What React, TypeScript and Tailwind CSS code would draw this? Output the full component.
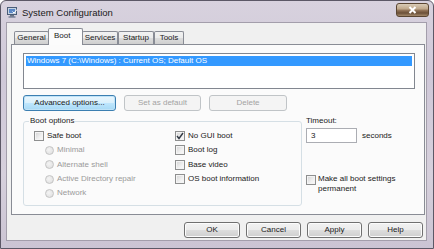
import React from "react";

const font = "font-['Liberation_Sans',Arial,sans-serif]";

function Btn({
  label,
  w,
  disabled,
  primary,
}: {
  label: string;
  w: string;
  disabled?: boolean;
  primary?: boolean;
}) {
  let cls =
    "h-[16px] flex items-center justify-center rounded-[3px] border text-[8px] leading-none ";
  if (disabled) {
    cls += "border-[#c0c4c7] bg-[#f4f4f4] text-[#a3a3a3]";
  } else if (primary) {
    cls +=
      "border-[#3c7fb1] bg-[linear-gradient(180deg,#eaf6fd_0%,#d9f0fc_50%,#bee6fd_51%,#a7d9f5_100%)] text-[#1a1a1a] shadow-[inset_0_0_0_1px_#bfe3f8]";
  } else {
    cls +=
      "border-[#707070] bg-[linear-gradient(180deg,#f2f2f2_0%,#ebebeb_50%,#dddddd_51%,#cfcfcf_100%)] text-[#1a1a1a] shadow-[inset_0_0_0_1px_#fcfcfc]";
  }
  return <div className={`${cls} ${w}`}>{label}</div>;
}

function Check({ checked, disabled }: { checked?: boolean; disabled?: boolean }) {
  return (
    <div
      className={`w-[10px] h-[10px] shrink-0 border flex items-center justify-center ${
        disabled ? "border-[#b1b1b1]" : "border-[#8e8f8f]"
      } bg-[linear-gradient(135deg,#d2d2d2_0%,#f0f0f0_60%,#fbfbfb_100%)] shadow-[inset_0_0_0_1px_#f4f4f4]`}
    >
      {checked && (
        <svg width="8" height="8" viewBox="0 0 8 8">
          <path d="M1 4 L3 6.5 L7 1" fill="none" stroke="#333a45" strokeWidth="1.4" />
        </svg>
      )}
    </div>
  );
}

function Radio() {
  return (
    <div className="w-[9px] h-[9px] shrink-0 rounded-full border border-[#c4c4c4] bg-[radial-gradient(circle_at_40%_40%,#f4f4f4_0%,#dcdcdc_100%)]" />
  );
}

function Row({ children }: { children: React.ReactNode }) {
  return <div className="h-[14.3px] flex items-center">{children}</div>;
}

export default function App() {
  const tabs = [
    { name: "General", w: "w-[35px]" },
    { name: "Boot", w: "w-[35px]", active: true },
    { name: "Services", w: "w-[36px]" },
    { name: "Startup", w: "w-[36px]" },
    { name: "Tools", w: "w-[30px]" },
  ];

  return (
    <div
      className={`${font} w-[434px] h-[249px] overflow-hidden rounded-t-[6px] border border-[#5c5866] bg-[linear-gradient(180deg,#d8d2de_0%,#cfc8d8_30%,#d6d0dc_70%,#cbc4d3_100%)] flex flex-col`}
    >
      {/* title bar */}
      <div className="h-[21px] shrink-0 flex items-start pl-[6px] pr-[4px]">
        <div className="mt-[6px] w-[11px] h-[11px]">
          <svg width="11" height="11" viewBox="0 0 11 11">
            <rect x="0.5" y="0.5" width="9" height="7" fill="#c5d3e2" stroke="#4b5d78" />
            <rect x="2" y="2" width="6" height="4" fill="#5a86c5" />
            <rect x="3" y="8" width="4" height="1.5" fill="#6a7584" />
            <rect x="1.5" y="9.5" width="7" height="1" fill="#4b5d78" />
            <path d="M5.5 4.5 L7 6 L10 2.5" fill="none" stroke="#ffffff" strokeWidth="1" />
          </svg>
        </div>
        <div className="ml-[4px] mt-[6px] text-[9.5px] leading-[12px] text-[#1a1a1a]">
          System Configuration
        </div>
        <div className="ml-auto mt-[2px] w-[33px] h-[14px] rounded-[3px] border border-[#5a4632] bg-[linear-gradient(180deg,#d9cbb6_0%,#c1a98c_40%,#8e7055_55%,#6b5038_75%,#a48a6c_100%)] flex items-center justify-center">
          <svg width="9" height="8" viewBox="0 0 9 8">
            <path d="M1.5 1 L7.5 7 M7.5 1 L1.5 7" stroke="#ffffff" strokeWidth="2" />
          </svg>
        </div>
      </div>

      {/* client */}
      <div className="ml-[5px] mr-[6px] mb-[7px] flex-1 border border-[#a39eab] bg-[#f0f0f0] flex flex-col text-[8px] text-[#1a1a1a]">
        {/* tabs */}
        <div className="h-[21px] pt-[5px] pl-[7px] flex items-end">
          {tabs.map((t) =>
            t.active ? (
              <div
                key={t.name}
                className={`${t.w} -mx-[1px] relative z-10 h-[17px] -mb-[1px] border border-b-0 border-[#898c95] rounded-t-[2px] bg-[#fcfcfc] pl-[5px] pt-[2px] leading-[10px]`}
              >
                {t.name}
              </div>
            ) : (
              <div
                key={t.name}
                className={`${t.w} h-[13px] border border-b-0 border-[#898c95] rounded-t-[2px] bg-[linear-gradient(180deg,#f2f2f2_0%,#ebebeb_50%,#dddddd_51%,#cfcfcf_100%)] flex items-center justify-center leading-none`}
              >
                {t.name}
              </div>
            )
          )}
        </div>

        {/* tab panel */}
        <div className="ml-[4px] w-[414px] h-[171px] border border-[#898c95] bg-[#fbfbfb] pl-[11px] pt-[8px] pr-[9px]">
          <div className="h-[36px] border border-[#828790] bg-white p-[2px]">
            <div className="h-[10px] bg-[#3399ff] text-white leading-[10px] pl-[1px]">
              Windows 7 (C:\Windows) : Current OS; Default OS
            </div>
          </div>

          <div className="mt-[6px] flex gap-[8px]">
            <Btn label="Advanced options..." w="w-[93px]" primary />
            <Btn label="Set as default" w="w-[77px]" disabled />
            <Btn label="Delete" w="w-[78px]" disabled />
          </div>

          <div className="mt-[5px] flex">
            <fieldset className="w-[279px] h-[90px] border border-[#d5dfe5] rounded-[3px] pl-[10px] pt-[3px]">
              <legend className="ml-[-5px] px-[1px] leading-[10px]">Boot options</legend>
              <div className="flex">
                <div className="w-[141px]">
                  <Row>
                    <Check />
                    <span className="ml-[3px]">Safe boot</span>
                  </Row>
                  {["Minimal", "Alternate shell", "Active Directory repair", "Network"].map((n) => (
                    <Row key={n}>
                      <div className="ml-[11px]">
                        <Radio />
                      </div>
                      <span className="ml-[3px] text-[#9a9a9a]">{n}</span>
                    </Row>
                  ))}
                </div>
                <div>
                  <Row>
                    <Check checked />
                    <span className="ml-[3px]">No GUI boot</span>
                  </Row>
                  <Row>
                    <Check />
                    <span className="ml-[3px]">Boot log</span>
                  </Row>
                  <Row>
                    <Check />
                    <span className="ml-[3px]">Base video</span>
                  </Row>
                  <Row>
                    <Check />
                    <span className="ml-[3px]">OS boot information</span>
                  </Row>
                </div>
              </div>
            </fieldset>

            <div className="ml-[4px] flex flex-col">
              <div className="leading-[10px]">Timeout:</div>
              <div className="mt-[2px] flex items-center">
                <div className="w-[51px] h-[15px] border border-[#abadb3] bg-white pl-[4px] flex items-center">
                  3
                </div>
                <span className="ml-[5px]">seconds</span>
              </div>
              <div className="mt-[32px] flex items-start">
                <Check />
                <div className="ml-[2px] leading-[10px] -mt-[1px]">
                  Make all boot settings
                  <br />
                  permanent
                </div>
              </div>
            </div>
          </div>
        </div>

        {/* bottom buttons */}
        <div className="mt-[7px] pr-[3px] flex justify-end gap-[6px]">
          <Btn label="OK" w="w-[56px]" />
          <Btn label="Cancel" w="w-[55px]" />
          <Btn label="Apply" w="w-[55px]" />
          <Btn label="Help" w="w-[55px]" />
        </div>
      </div>
    </div>
  );
}
